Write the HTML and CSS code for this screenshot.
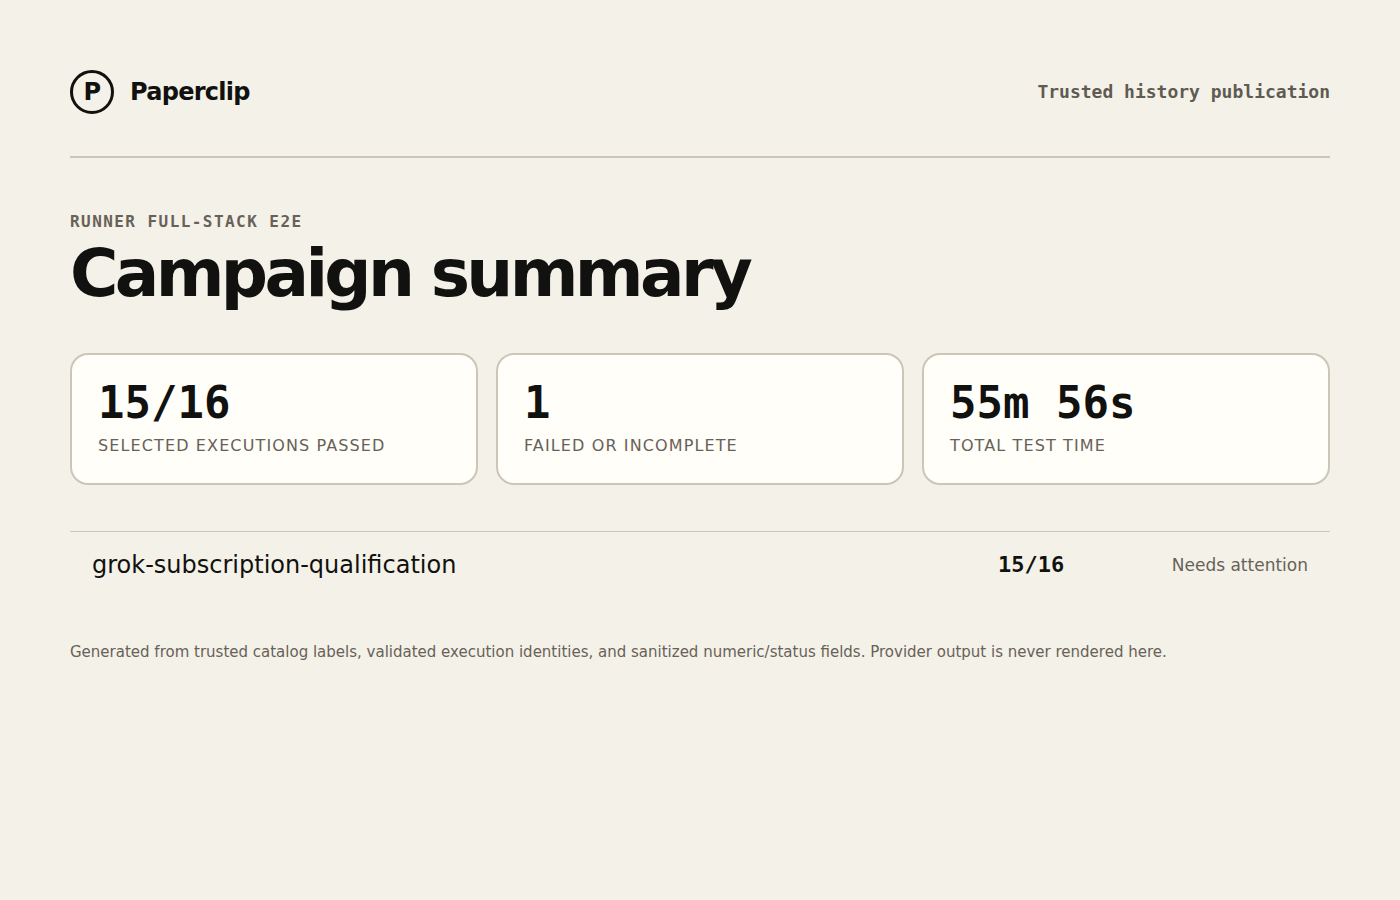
FILE: index.html
```html
<!DOCTYPE html>
<html lang="en">
<head>
<meta charset="utf-8">
<meta name="viewport" content="width=device-width, initial-scale=1">
<title>Campaign summary</title>
<link rel="stylesheet" href="styles.css">
</head>
<body>
<header class="masthead">
  <div class="brand"><span class="brand-mark">P</span><span>Paperclip</span></div>
  <div class="publication">Trusted history publication</div>
</header>
<main>
  <p class="eyebrow">Runner full-stack E2E</p>
  <h1 class="title">Campaign summary</h1>
  <section class="metrics">
    <div class="metric"><strong class="metric-value">15/16</strong><span class="metric-label">Selected executions passed</span></div>
    <div class="metric"><strong class="metric-value">1</strong><span class="metric-label">Failed or incomplete</span></div>
    <div class="metric"><strong class="metric-value">55m 56s</strong><span class="metric-label">Total test time</span></div>
  </section>
  <table class="suites">
    <tbody>
      <tr><td class="suite-name">grok-subscription-qualification</td><td class="suite-score">15/16</td><td class="suite-status">Needs attention</td></tr>
    </tbody>
  </table>
</main>
<footer class="note">Generated from trusted catalog labels, validated execution identities, and sanitized numeric/status fields. Provider output is never rendered here.</footer>
</body>
</html>
```
FILE: styles.css
```css
* { box-sizing: border-box; }

body {
  margin: 0;
  padding: 70px;
  background: #f4f1e8;
  color: #11110f;
  font-family: "DejaVu Sans", sans-serif;
}

.masthead {
  display: flex;
  align-items: center;
  justify-content: space-between;
  padding-bottom: 42px;
  border-bottom: 2px solid #cbc6b8;
}

.brand {
  display: flex;
  align-items: center;
  gap: 16px;
  font-size: 24px;
  font-weight: 700;
  letter-spacing: -0.03em;
}

.brand-mark {
  display: grid;
  place-items: center;
  width: 44px;
  height: 44px;
  border: 3px solid #11110f;
  border-radius: 50%;
}

.publication {
  color: #5f5b52;
  font: 700 18px/22px "DejaVu Sans Mono", monospace;
}

.eyebrow {
  margin: 54px 0 8px;
  color: #686158;
  font-size: 16px;
  font-weight: 700;
  line-height: 20px;
  font-family: "DejaVu Sans Mono", monospace;
  letter-spacing: 0.09em;
  text-transform: uppercase;
}

.title {
  margin: 0;
  font-size: 66px;
  line-height: 68px;
  letter-spacing: -0.055em;
}

.metrics {
  display: grid;
  grid-template-columns: repeat(3, 1fr);
  gap: 18px;
  margin-top: 45px;
}

.metric {
  padding: 22px 26px 27px;
  background: #fffef9;
  border: 2px solid #cbc6b8;
  border-radius: 18px;
}

.metric-value {
  display: block;
  font: 700 44px/52px "DejaVu Sans Mono", monospace;
}

.metric-label {
  display: block;
  margin-top: 7px;
  color: #686158;
  font-size: 16px;
  line-height: 20px;
  letter-spacing: 0.07em;
  text-transform: uppercase;
}

.suites {
  width: 100%;
  margin-top: 46px;
  border-top: 1px solid #cbc6b8;
  border-spacing: 0;
}

.suites td { padding: 18px 22px; line-height: 30px; }

.suite-name { font-size: 24px; }

.suite-score {
  width: 154px;
  font: 700 22px "DejaVu Sans Mono", monospace;
}

.suite-status {
  width: 200px;
  color: #686158;
  font-size: 17px;
  text-align: right;
}

.note {
  margin-top: 44px;
  color: #686158;
  font-size: 15px;
  line-height: 20px;
}
```
